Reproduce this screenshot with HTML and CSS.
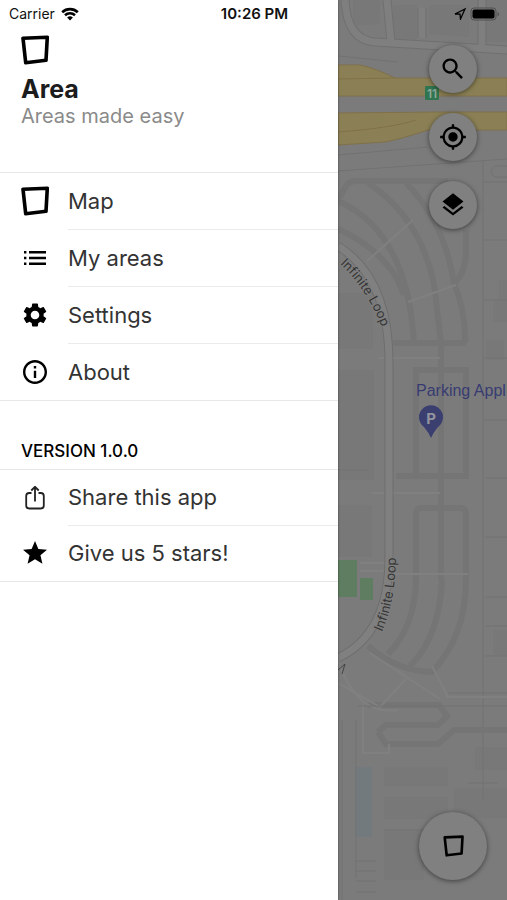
FILE: index.html
```html
<!DOCTYPE html>
<html lang="en">

<head>
  <meta charset="UTF-8">
  <meta name="viewport" content="width=device-width, initial-scale=1.0">
  <title>Area</title>
  <link rel="stylesheet" href="styles.css">
</head>

<body>
  <div class="app">

    <header class="status-bar">
      <div class="status-left">
        <span>Carrier</span>
        <svg class="wifi" viewBox="0 0 18 14" aria-hidden="true">
          <path d="M1.2 5.2a11.3 11.3 0 0 1 15.6 0" />
          <path d="M4 8.2a7.3 7.3 0 0 1 10 0" />
          <path class="wifi-dot" d="M9 13.6l-2.9-3a4.2 4.2 0 0 1 5.8 0z" />
        </svg>
      </div>
      <div class="status-time">10:26 PM</div>
      <div class="status-right">
        <svg class="location" viewBox="0 0 12 12" aria-hidden="true">
          <path d="M1 6L11 1L6.5 11L6 6.2z" />
        </svg>
        <svg class="battery" viewBox="0 0 30 14" aria-hidden="true">
          <rect class="battery-case" x="1" y="1" width="25" height="12" rx="3" />
          <rect x="2.5" y="2.5" width="22" height="9" rx="2" />
          <path class="battery-cap" d="M27.5 5v4.5q1.5-1 1.5-2.2t-1.5-2.3z" />
        </svg>
      </div>
    </header>

    <nav class="drawer">
      <div class="brand">
        <svg class="area-icon" viewBox="0 0 28 30" aria-hidden="true">
          <path d="M2 3.2L26.3 2.2L25 25.3L4.7 27.7z" />
        </svg>
        <h1>Area</h1>
        <p>Areas made easy</p>
      </div>

      <ul class="menu">
        <li>
          <a href="#map">
            <svg class="area-icon" viewBox="0 0 28 30" aria-hidden="true">
              <path d="M2 3.2L26.3 2.2L25 25.3L4.7 27.7z" />
            </svg>
            <span>Map</span>
          </a>
        </li>
        <li>
          <a href="#areas">
            <svg class="icon" viewBox="0 0 24 24" aria-hidden="true">
              <path d="M1 5h2.4v2.4H1zM1 10.8h2.4v2.4H1zM1 16.6h2.4v2.4H1zM6 5h17v2.4H6zM6 10.8h17v2.4H6zM6 16.6h17v2.4H6z" />
            </svg>
            <span>My areas</span>
          </a>
        </li>
        <li>
          <a href="#settings">
            <svg class="icon" viewBox="2 2 20 20" aria-hidden="true">
              <path d="M19.14 12.94c.04-.3.06-.61.06-.94 0-.32-.02-.64-.07-.94l2.03-1.58c.18-.14.23-.41.12-.61l-1.92-3.32c-.12-.22-.37-.29-.59-.22l-2.39.96c-.5-.38-1.03-.7-1.62-.94l-.36-2.54c-.04-.24-.24-.41-.48-.41h-3.84c-.24 0-.43.17-.47.41l-.36 2.54c-.59.24-1.13.57-1.62.94l-2.39-.96c-.22-.08-.47 0-.59.22L2.74 8.87c-.12.21-.08.47.12.61l2.03 1.58c-.05.3-.09.63-.09.94s.02.64.07.94l-2.03 1.58c-.18.14-.23.41-.12.61l1.92 3.32c.12.22.37.29.59.22l2.39-.96c.5.38 1.03.7 1.62.94l.36 2.54c.05.24.24.41.48.41h3.84c.24 0 .44-.17.47-.41l.36-2.54c.59-.24 1.13-.56 1.62-.94l2.39.96c.22.08.47 0 .59-.22l1.92-3.32c.12-.22.07-.47-.12-.61l-2.01-1.58zM12 15.6c-1.98 0-3.6-1.62-3.6-3.6s1.62-3.6 3.6-3.6 3.6 1.62 3.6 3.6-1.62 3.6-3.6 3.6z" />
            </svg>
            <span>Settings</span>
          </a>
        </li>
        <li>
          <a href="#about">
            <svg class="icon" viewBox="2 2 20 20" aria-hidden="true">
              <path d="M11 7h2v2h-2zm0 4h2v6h-2zm1-9C6.48 2 2 6.48 2 12s4.48 10 10 10 10-4.48 10-10S17.52 2 12 2zm0 18c-4.41 0-8-3.59-8-8s3.59-8 8-8 8 3.59 8 8-3.59 8-8 8z" />
            </svg>
            <span>About</span>
          </a>
        </li>
      </ul>

      <h2>VERSION 1.0.0</h2>

      <ul class="menu">
        <li>
          <a href="#share">
            <svg class="icon icon-line" viewBox="0 0 24 24" aria-hidden="true">
              <path d="M8.5 7H6.2a3 3 0 0 0-3 3v9.5a3 3 0 0 0 3 3h11.6a3 3 0 0 0 3-3V10a3 3 0 0 0-3-3h-2.3M12 15.5V1M8.3 4.5L12 .8l3.7 3.7" />
            </svg>
            <span>Share this app</span>
          </a>
        </li>
        <li>
          <a href="#rate">
            <svg class="icon" viewBox="2 2 20 20" aria-hidden="true">
              <path d="M12 17.27L18.18 21l-1.64-7.03L22 9.24l-7.19-.61L12 2 9.19 8.63 2 9.24l5.46 4.73L5.82 21z" />
            </svg>
            <span>Give us 5 stars!</span>
          </a>
        </li>
      </ul>
    </nav>

    <main class="map-view">
      <svg class="map" viewBox="0 0 169 900" preserveAspectRatio="xMinYMin slice" role="img" aria-label="Map">
        <defs>
          <path id="loop-north" d="M2 264Q29 289 44 328" />
          <path id="loop-south" d="M44 632Q58 600 58 552" />
        </defs>

        <!-- blocks -->
        <g class="block">
          <path d="M15 0h27v24l-27 2zM55 5h24v36l-24-2zM91 5h40v32l-40-3zM148 0h21v42h-21z" />
          <path d="M0 293h35v56H0zM0 370h36v110H0zM0 505h34v52H0z" />
          <path d="M137 747h32v23h-32zM46 767h64v19H46zM46 797h64v22H46zM116 788h53v30h-53zM46 831h40v49H46z" />
          <path d="M161 280h8v22h-8zM155 300h14v22h-14zM148 340h18v20h-18zM155 630h14v25h-14z" />
        </g>
        <path class="water" d="M17 767h17v70H17z" />
        <path class="park" d="M0 560h19v37H0zM22 578h13v22H22z" />

        <!-- streets -->
        <g class="street-edge">
          <path d="M7 0q2 40 30 42l132 8" />
          <path d="M49 0l4 42M144 0v45M84 8v30" />
        </g>
        <g class="street">
          <path d="M7 0q2 40 30 42l132 8" />
          <path d="M49 0l4 42M144 0v45M84 8v30" />
        </g>
        <path class="thin" d="M0 56l60 6M0 155l90-8M0 171l169-12M145 160v640M145 182h24M169 177h-12a6 6 0 0 1 0-11h12M145 240h24M145 300h24M145 358h24M145 420h24M147 478h22M147 537h22M147 597h22M147 626h22M147 656h22M0 470h30" />

        <!-- parking lots -->
        <g class="lane">
          <path d="M0 200l8-14q3-5 10-5h92M0 201q50 22 67 85 6 18 9 57M30 183q52 34 66 101l7 59v237M0 229q52 24 66 66M68 183q38 38 48 100 12 30 11 60" />
          <path d="M128 230v20q0 26-14 34M55 343h73" />
          <path d="M78 476V370h50v106H58M78 576v-62q0-6 6-6h38q6 0 6 6v66q0 56-34 92M78 576q0 50-28 78M104 580q-3 58-32 86M30 646q30 26 66 26" />
          <path d="M40 732l8-7h52l9-9-8-11H30M40 732l8 12h52l16-14h53" />
        </g>
        <path class="lane-light" d="M28 262l47-42M70 302l48-17M40 358h62M34 493h68M22 563h30M22 571h30M58 574h72M25 705v48h26v-9M32 653l70 46M0 683l42 24 26-28" />

        <!-- Infinite Loop road -->
        <path class="loop-edge" d="M0 246q51 32 51 116v195q0 77-51 101" />
        <path class="loop" d="M0 246q51 32 51 116v195q0 77-51 101" />
        <path class="lane-light" d="M0 660q18 56 60 50M94 666l16 31h59" />
        <path class="thin" d="M20 706h149M110 693h59M18 720v158M4 720v180M18 861h20M18 871h20M18 881h20M18 892h20M130 783h30M46 830h40" />
        <path class="mark" d="M0 670l7-6-3 10" />

        <!-- highways -->
        <g class="highway">
          <path d="M0 65h22q15 3 35 13h112v18H0z" />
          <path d="M0 113l100-1h69v18H90q-27 9-43 12L0 145z" />
        </g>
        <path class="highway-line" d="M0 79l57-1M0 132q54-4 78-12" />
        <rect class="shield" x="87" y="86" width="14" height="14" rx="1" />
        <text class="shield-text" x="94" y="98" text-anchor="middle">11</text>

        <!-- labels -->
        <text class="road-label"><textPath href="#loop-north">Infinite Loop</textPath></text>
        <text class="road-label"><textPath href="#loop-south">Infinite Loop</textPath></text>
        <text class="place-label" x="78" y="396">Parking Appl</text>
        <path class="pin" d="M93 438q-2-5-7-11a12 12 0 1 1 14 0q-5 6-7 11z" />
        <text class="pin-text" x="93" y="424" text-anchor="middle">P</text>
      </svg>

      <div class="controls">
        <div class="control-group">
          <button class="round-btn" type="button" aria-label="Search">
            <svg viewBox="0 0 24 24" aria-hidden="true">
              <path d="M15.5 14h-.79l-.28-.27C15.41 12.59 16 11.11 16 9.5 16 5.91 13.09 3 9.5 3S3 5.91 3 9.5 5.91 16 9.5 16c1.61 0 3.09-.59 4.23-1.57l.27.28v.79l5 4.99L20.49 19l-4.99-5zm-6 0C7.01 14 5 11.99 5 9.5S7.01 5 9.5 5 14 7.01 14 9.5 11.99 14 9.5 14z" />
            </svg>
          </button>
          <button class="round-btn" type="button" aria-label="My location">
            <svg viewBox="0 0 24 24" aria-hidden="true">
              <path d="M12 8c-2.21 0-4 1.79-4 4s1.79 4 4 4 4-1.79 4-4-1.79-4-4-4zm8.94 3A8.994 8.994 0 0 0 13 3.06V1h-2v2.06A8.994 8.994 0 0 0 3.06 11H1v2h2.06A8.994 8.994 0 0 0 11 20.94V23h2v-2.06A8.994 8.994 0 0 0 20.94 13H23v-2h-2.06zM12 19c-3.87 0-7-3.13-7-7s3.13-7 7-7 7 3.13 7 7-3.13 7-7 7z" />
            </svg>
          </button>
          <button class="round-btn" type="button" aria-label="Layers">
            <svg viewBox="0 0 24 24" aria-hidden="true">
              <path d="M11.99 18.54l-7.37-5.73L3 14.07l9 7 9-7-1.63-1.27-7.38 5.74zM12 16l7.36-5.73L21 9l-9-7-9 7 1.63 1.27L12 16z" />
            </svg>
          </button>
        </div>
        <button class="round-btn round-btn-large" type="button" aria-label="New area">
          <svg class="area-icon" viewBox="0 0 28 30" aria-hidden="true">
            <path d="M2 3.2L26.3 2.2L25 25.3L4.7 27.7z" />
          </svg>
        </button>
      </div>
    </main>

  </div>
</body>

</html>
```
FILE: styles.css
```css
* {
  box-sizing: border-box;
}

body {
  margin: 0;
  font-family: Inter, "Liberation Sans", sans-serif;
  color: #000;
  background-color: #7b7b7b;
}

.app {
  position: relative;
  display: grid;
  grid-template-columns: 2fr 1fr;
  min-height: 100vh;
}

/* Status bar */
.status-bar {
  position: absolute;
  top: 0;
  left: 0;
  right: 0;
  z-index: 2;
  display: grid;
  grid-template-columns: 1fr auto 1fr;
  align-items: center;
  height: 27px;
  padding: 0 7px 0 9px;
  font-size: 14px;
  color: #111;
}

.status-left,
.status-right {
  display: flex;
  align-items: center;
  gap: 6px;
}

.status-right {
  gap: 4px;
  justify-content: flex-end;
}

.status-time {
  font-size: 15px;
  font-weight: 600;
}

.wifi {
  width: 18px;
  height: 14px;
  fill: none;
  stroke: #000;
  stroke-width: 2.6;
}

.wifi-dot {
  fill: #000;
  stroke: none;
}

.location {
  width: 12px;
  height: 12px;
  fill: none;
  stroke: #000;
  stroke-width: 1.3;
}

.battery {
  width: 30px;
  height: 14px;
}

.battery-case {
  fill: none;
  stroke: #505050;
}

.battery-cap {
  fill: #505050;
}

/* Drawer */
.drawer {
  z-index: 1;
  background-color: #fff;
  box-shadow: 0 0 2px rgba(0, 0, 0, 0.5);
}

.brand {
  height: 172px;
  padding: 35px 21px 0;
}

.area-icon {
  display: block;
  width: 28px;
  height: 30px;
  fill: none;
  stroke: #000;
  stroke-width: 3.6;
  stroke-linejoin: round;
}

h1 {
  margin: 10px 0 0;
  font-size: 25px;
  line-height: 28px;
  font-weight: 700;
  color: #1c1c1c;
}

.brand p {
  margin: 0;
  font-size: 20px;
  line-height: 26px;
  color: #8a8a8a;
}

h2 {
  margin: 0;
  padding: 40px 21px 8px;
  font-size: 17px;
  line-height: 20px;
  font-weight: 500;
}

.menu {
  margin: 0;
  padding: 0;
  list-style: none;
  border-top: 1px solid #e8e8e8;
  border-bottom: 1px solid #e8e8e8;
}

.menu a {
  display: grid;
  grid-template-columns: 28px 1fr;
  column-gap: 19px;
  align-items: center;
  padding-left: 21px;
  font-size: 22px;
  color: #333;
  text-decoration: none;
}

.menu span {
  line-height: 56px;
}

h2 + .menu span {
  line-height: 55px;
}

.menu li + li span {
  border-top: 1px solid #ebebeb;
}

.icon {
  width: 24px;
  height: 24px;
  justify-self: center;
  fill: #000;
}

.icon-line {
  fill: none;
  stroke: #222;
  stroke-width: 1.8;
}

/* Map */
.map-view {
  position: relative;
  display: flex;
  justify-content: flex-end;
  overflow: hidden;
}

.map {
  position: absolute;
  top: 0;
  left: 0;
  width: 100%;
  height: 100%;
  background-color: #7b7b7b;
}

.map path {
  fill: none;
}

.map .block path {
  fill: #787878;
}

.map .water {
  fill: #737a7e;
}

.map .park {
  fill: #5f7d60;
}

.street-edge {
  stroke: #707070;
  stroke-width: 9;
}

.street {
  stroke: #7f7f7f;
  stroke-width: 7;
}

.thin {
  stroke: #727272;
}

.lane {
  stroke: #757575;
  stroke-width: 6;
}

.lane-light {
  stroke: #808080;
  stroke-width: 2;
}

.loop-edge {
  stroke: #6e6e6e;
  stroke-width: 9;
}

.loop {
  stroke: #808080;
  stroke-width: 7;
}

.map .mark {
  stroke: #444;
}

.map .highway path {
  fill: #8b8055;
  stroke: #80704a;
}

.highway-line {
  stroke: #80704a;
}

.shield {
  fill: #2f7550;
}

.shield-text {
  font-size: 12px;
  font-weight: 600;
  fill: #8fa899;
}

.road-label {
  font-size: 13px;
  fill: #353535;
  stroke: #7f7f7f;
  stroke-width: 2;
  paint-order: stroke;
}

.place-label {
  font-family: "Liberation Sans", sans-serif;
  font-size: 16px;
  fill: #383b72;
}

.map .pin {
  fill: #3b3f70;
}

.pin-text {
  font-size: 15px;
  font-weight: 700;
  fill: #92939f;
}

/* Map controls */
.controls {
  position: relative;
  display: flex;
  flex-direction: column;
  align-items: center;
  justify-content: space-between;
  padding: 45px 20px 20px 0;
}

.control-group {
  display: flex;
  flex-direction: column;
  gap: 20px;
}

.round-btn {
  display: flex;
  align-items: center;
  justify-content: center;
  width: 48px;
  height: 48px;
  padding: 0;
  border: none;
  border-radius: 50%;
  background-color: #808080;
  box-shadow: 0 1px 5px rgba(0, 0, 0, 0.5);
  cursor: pointer;
}

.round-btn svg {
  width: 28px;
  height: 28px;
}

.round-btn-large {
  width: 68px;
  height: 68px;
}

.round-btn-large svg {
  width: 21px;
  height: 22px;
}
```
